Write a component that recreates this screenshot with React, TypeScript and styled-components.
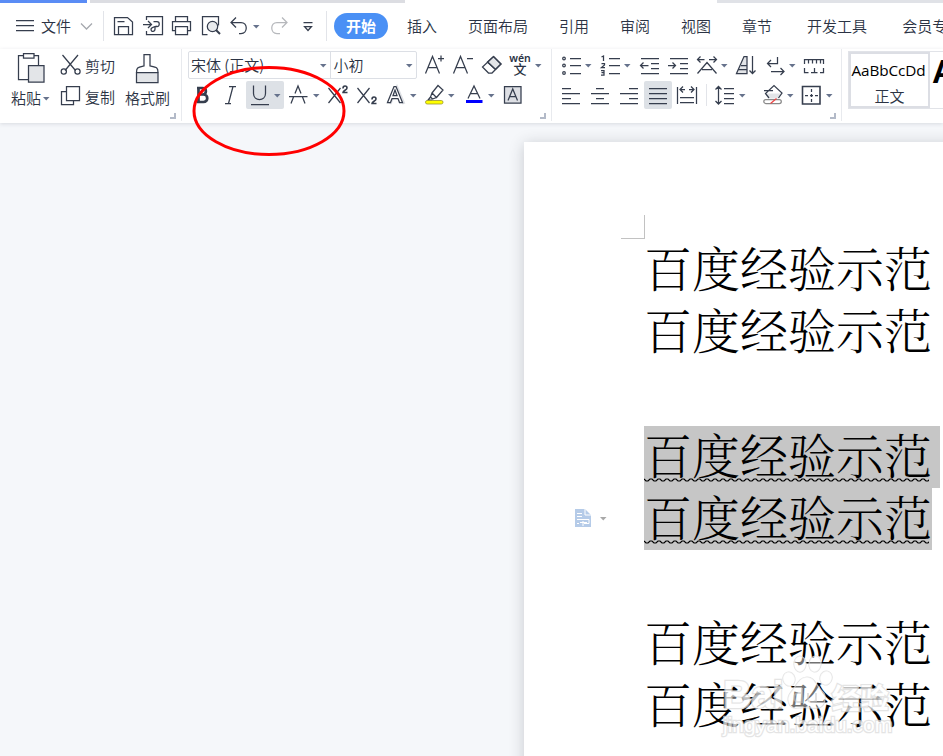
import React from "react";
import styled, { createGlobalStyle } from "styled-components";

const INK = "#2b3344";

const GlobalStyle = createGlobalStyle`
  * { box-sizing: border-box; }
  html, body { margin: 0; padding: 0; overflow: hidden; }
  body { font-family: "Noto Sans CJK SC", sans-serif; font-size: 15px; font-weight: 350; color: ${INK}; }
`;

const Window = styled.div`
  position: relative;
  display: flex;
  flex-direction: column;
  width: 943px;
  height: 756px;
  overflow: hidden;
  background: #f5f7fa;
`;

const TabStrip = styled.div`
  display: flex;
  flex: none;
  height: 3px;
  background: #fff;
`;

const TabEdge = styled.div<{ $w: number; $color: string; $gap?: number }>`
  width: ${(p) => p.$w}px;
  margin-left: ${(p) => p.$gap ?? 0}px;
  background: ${(p) => p.$color};
`;

const MenuBar = styled.div`
  display: flex;
  flex: none;
  align-items: center;
  height: 46px;
  background: #fff;
  white-space: nowrap;
`;

const Label = styled.span<{ $gap?: number }>`
  flex: none;
  margin-left: ${(p) => p.$gap ?? 0}px;
  font-size: 15px;
  line-height: 20px;
  white-space: nowrap;
`;

const ActiveTab = styled.span`
  flex: none;
  width: 54px;
  height: 26px;
  margin-left: 7px;
  border-radius: 13px;
  background: #4a90f5;
  color: #fff;
  font-weight: 700;
  line-height: 25px;
  text-align: center;
`;

const Divider = styled.div<{ $h: number; $gap?: number }>`
  flex: none;
  width: 1px;
  height: ${(p) => p.$h}px;
  margin-left: ${(p) => p.$gap ?? 0}px;
  background: #e2e4e9;
`;

const Glyph = styled.svg<{ $gap?: number; $color?: string }>`
  display: block;
  flex: none;
  margin-left: ${(p) => p.$gap ?? 0}px;
  overflow: visible;
  fill: none;
  stroke: ${(p) => p.$color ?? "#363e4e"};
  stroke-width: 1.25;
`;

type IconProps = { w?: number; h?: number; gap?: number; color?: string; children: React.ReactNode };

const Icon = ({ w = 20, h = 24, gap, color, children }: IconProps) => (
  <Glyph width={w} height={h} viewBox={`0 0 ${w} ${h}`} $gap={gap} $color={color}>
    {children}
  </Glyph>
);

const Caret = ({ gap = 4, color = "#66728c" }: { gap?: number; color?: string }) => (
  <Icon w={7} gap={gap} color={color}>
    <path d="M0 11h6.500L3.250 14.500z" fill={color} stroke="none" />
  </Icon>
);

const Ribbon = styled.div`
  display: flex;
  flex: none;
  height: 74px;
  background: #fff;
  box-shadow: 0 1px 4px rgba(40, 50, 70, 0.14);
  z-index: 1;
`;

const Group = styled.section<{ $w: number }>`
  position: relative;
  display: flex;
  flex: none;
  width: ${(p) => p.$w}px;
  height: 72px;
  border-right: 1px solid #e8eaee;
`;

const ToolRows = styled.div<{ $pad: number }>`
  display: flex;
  flex-direction: column;
  gap: 2px;
  padding: 2px 0 0 ${(p) => p.$pad}px;
`;

const ToolRow = styled.div`
  display: flex;
  align-items: center;
  height: 28px;
`;

const Launcher = styled.span`
  position: absolute;
  right: 5px;
  bottom: 2px;
  width: 6px;
  height: 6px;
  border: solid #b3bac8;
  border-width: 0 2px 2px 0;
`;

const BigTool = styled.div<{ $w: number; $pad: number }>`
  display: flex;
  flex: none;
  flex-direction: column;
  width: ${(p) => p.$w}px;
  padding: 4px 0 0 ${(p) => p.$pad}px;
`;

const LabelRow = styled.div`
  display: flex;
  align-items: center;
  height: 24px;
  margin-top: 1px;
`;

const PairColumn = styled.div`
  display: flex;
  flex-direction: column;
  gap: 7px;
  width: 64px;
  padding-top: 5px;
`;

const PairRow = styled.div`
  display: flex;
  align-items: center;
  height: 24px;
`;

const ComboBox = styled.div`
  display: flex;
  width: 229px;
  height: 28px;
  margin-left: -1px;
  border: 1px solid #dcdfe5;
  border-radius: 2px;
`;

const ComboPart = styled.div<{ $w: number }>`
  display: flex;
  align-items: center;
  justify-content: space-between;
  width: ${(p) => p.$w}px;
  padding: 0 3px 1px 2px;
  & + & { border-left: 1px solid #dcdfe5; }
`;

const PhoneticGuide = styled.span`
  display: flex;
  flex: none;
  flex-direction: column;
  align-items: center;
  width: 20px;
  height: 22px;
  margin-left: 8px;
  font: 600 10.5px/9px "Noto Sans", sans-serif;
`;

const PhoneticBase = styled.span`
  font: 500 13px/12px "Noto Sans CJK SC", sans-serif;
`;

const Pressed = styled.div<{ $w: number; $gap: number }>`
  display: flex;
  flex: none;
  align-items: center;
  width: ${(p) => p.$w}px;
  height: 28px;
  margin-left: ${(p) => p.$gap}px;
  padding-left: 5px;
  border-radius: 2px;
  background: #dde1e6;
`;

const StyleGallery = styled.div`
  display: flex;
  flex: none;
  width: 110px;
  height: 58px;
  margin: 2px 0 0 6px;
  border: 1px solid #e1e3e8;
`;

const StyleCard = styled.div`
  display: flex;
  flex: none;
  flex-direction: column;
  align-items: center;
  width: 81px;
  height: 56px;
  border: 2px solid #dcdee4;
`;

const StyleSample = styled.span`
  height: 33px;
  padding-top: 6px;
  margin-left: -2px;
  color: #000;
  font: 400 15.3px/20px "Open Sans", sans-serif;
  letter-spacing: -0.1px;
`;

const HeadingSample = styled.span`
  margin-left: 2px;
  color: #000;
  font: 700 33px/39px "Liberation Sans", sans-serif;
`;

const Workspace = styled.main`
  display: flex;
  flex: 1;
  min-height: 0;
  padding: 19px 0 0 524px;
`;

const Page = styled.article`
  display: flex;
  flex: none;
  width: 440px;
  height: 700px;
  background: #fff;
  box-shadow: 0 2px 14px rgba(40, 45, 55, 0.22);
`;

const Gutter = styled.aside`
  display: flex;
  flex: none;
  flex-direction: column;
  width: 120px;
`;

const CornerMark = styled.div`
  width: 24px;
  height: 24px;
  margin: 73px 0 0 97px;
  border: solid #c2c2c2;
  border-width: 0 1px 1px 0;
`;

const PasteOptions = styled.div`
  display: flex;
  align-items: center;
  height: 24px;
  margin: 267px 0 0 51px;
`;

const Lines = styled.div`
  display: flex;
  flex-direction: column;
  padding-top: 97px;
`;

const Line = styled.p<{ $selected?: number }>`
  width: ${(p) => p.$selected ?? 288}px;
  height: 62.3px;
  margin: 0;
  background: ${(p) => (p.$selected ? "#c6c6c6" : "transparent")};
  color: #000;
  font: 300 48px/56px "Noto Serif CJK SC", "Noto Sans CJK SC Light", "Noto Sans CJK SC", serif;
  white-space: nowrap;
`;

const Wave = styled.svg`
  display: block;
  margin-top: -5px;
  fill: none;
  stroke: #000;
  stroke-width: 1.2;
`;

const Annotation = styled.svg`
  position: absolute;
  left: 189px;
  top: 64px;
  z-index: 3;
  fill: none;
  stroke: #f00;
  stroke-width: 3;
`;

const Watermark = styled.div`
  position: absolute;
  left: 723px;
  top: 655px;
  width: 172px;
  z-index: 3;
  opacity: 0.75;
  color: #fff;
  white-space: nowrap;
  -webkit-text-stroke: 2.5px #dcdcdc;
  paint-order: stroke fill;
`;

const WatermarkBrand = styled.div`
  display: flex;
  align-items: flex-end;
  height: 55px;
  font: 700 39px/30px "Liberation Sans", sans-serif;
`;

const WatermarkChinese = styled.span`
  margin-left: 2px;
  font: 700 28.5px/26px "Noto Sans CJK SC", sans-serif;
`;

const WatermarkUrl = styled.div`
  margin-top: 4px;
  font: 400 21px/22px "Liberation Sans", sans-serif;
`;

const wavePath = (() => {
  let d = "M0 2";
  for (let x = 0; x < 284; x += 8) d += "l2 2h2l2 -2h2";
  return d;
})();

const DocLine = ({ selected }: { selected?: number }) => (
  <Line $selected={selected}>
    百度经验示范
    {selected && (
      <Wave width="285" height="5">
        <path d={wavePath} />
      </Wave>
    )}
  </Line>
);

const App = () => (
  <>
    <GlobalStyle />
    <Window>
      <TabStrip>
        <TabEdge $w={87} $color="#5a8cf5" />
        <TabEdge $w={315} $gap={3} $color="#dcdde2" />
        <TabEdge $w={226} $gap={312} $color="#e0e2e7" />
      </TabStrip>

      <MenuBar>
        <Icon w={18} gap={16}><path d="M0 6.500h18M0 11.500h18M0 16.500h18" /></Icon>
        <Label $gap={7}>文件</Label>
        <Icon w={12} gap={10} color="#a5a8ae"><path d="M0 9.500l5.500 5.500 5.500-5.500" /></Icon>
        <Divider $h={30} $gap={10} />
        <Icon gap={10}>
          <path d="M0.500 3.500h13l5 4.500v12.500h-18zM4.500 20.500v-8h10v8M3.500 7.500h7" />
        </Icon>
        <Icon gap={9}>
          <path d="M3.500 6V2.500h16v18h-16V17M0 10.500h8.500M5 7l3.500 3.500L5 14M10.500 7.500h3.500c3 0 3 5 0 5h-2v2.500c0 3-4 3-4 .500s4-2.500 6-3.500" />
        </Icon>
        <Icon gap={9}>
          <path d="M3.500 7.500v-5h12v5M3.500 16.500h-3v-9h18v9h-3" />
          <path d="M3.500 12.500h12v8h-12z" fill="#fff" />
        </Icon>
        <Icon gap={10}>
          <path d="M5.500 20.500h-5v-18h16v5M16.500 2.500v9" />
          <circle cx="10.500" cy="12.500" r="5.200" fill="#e9ebee" />
          <path d="M14 16l4 4" strokeWidth="2" />
        </Icon>
        <Icon w={18} gap={8}><path d="M6 3.500L1 8.500l5 5M1.500 8.500H11c7 0 7 11 0 11H9" /></Icon>
        <Caret gap={5} />
        <Icon w={18} gap={10} color="#b6b8bc"><path d="M12 3.500l5 5-5 5M16.500 8.500H7c-7 0-7 11 0 11h3" /></Icon>
        <Icon w={12} gap={15}><path d="M0.500 8.500h9M1.500 12.500l3.500 4 3.500-4z" /></Icon>
        <Divider $h={30} $gap={11} />
        <ActiveTab>开始</ActiveTab>
        <Label $gap={19}>插入</Label>
        <Label $gap={31}>页面布局</Label>
        <Label $gap={31}>引用</Label>
        <Label $gap={31}>审阅</Label>
        <Label $gap={31}>视图</Label>
        <Label $gap={31}>章节</Label>
        <Label $gap={35}>开发工具</Label>
        <Label $gap={35}>会员专享</Label>
      </MenuBar>

      <Ribbon>
        <Group $w={182}>
          <BigTool $w={61} $pad={11}>
            <Icon w={28} h={32} gap={7}>
              <path d="M10 26.500H0.500V2.500h5M16 2.500h4.500V12M5.500 0.500h10.500v4.500H5.500z" />
              <path d="M10.500 12.500h15.500v16.500H10.500z" fill="#e3e5e8" />
            </Icon>
            <LabelRow>
              <Label>粘贴</Label>
              <Caret gap={2} />
            </LabelRow>
          </BigTool>
          <PairColumn>
            <PairRow>
              <Icon w={20}>
                <path d="M1.500 1l13 15.500M17 1L4 16.500" />
                <circle cx="2.800" cy="17.500" r="2.600" />
                <circle cx="16.500" cy="17.500" r="2.600" />
              </Icon>
              <Label $gap={4}>剪切</Label>
            </PairRow>
            <PairRow>
              <Icon w={20}>
                <path d="M5.500 6.500h-5v13h12v-4" />
                <path d="M5.500 1.500h13v14h-13z" />
              </Icon>
              <Label $gap={4}>复制</Label>
            </PairRow>
          </PairColumn>
          <BigTool $w={50} $pad={0}>
            <Icon w={24} h={32} gap={11}>
              <path d="M0.500 19.500h21.500v10H0.500z" fill="#e3e5e8" />
              <path d="M0.500 19.500c0-5 1-5 7.500-6.500V1.500h6v11.500c7 1.500 8 1.500 8 6.500" />
            </Icon>
            <LabelRow><Label>格式刷</Label></LabelRow>
          </BigTool>
          <Launcher />
        </Group>

        <Group $w={370}>
          <ToolRows $pad={7}>
            <ToolRow>
              <ComboBox>
                <ComboPart $w={142}><span>宋体 (正文)</span><Caret /></ComboPart>
                <ComboPart $w={86}><span>小初</span><Caret /></ComboPart>
              </ComboBox>
              <Icon gap={8}><path d="M0.500 20.500L7.500 3.500l7 17M3 14.500h9M13 5.500h6M16 2.500v6" /></Icon>
              <Icon gap={8}><path d="M0.500 20.500L7.500 3.500l7 17M3 14.500h9M14 5.500h6" /></Icon>
              <Icon gap={9}>
                <path d="M5.500 9l6-5.500 7.500 7.500-5.500 5.500z" fill="#e3e5e8" />
                <path d="M11.500 3.500l7.500 7.500-9 9H6.500l-6-6zM5.500 9l8 7.500" />
              </Icon>
              <PhoneticGuide>
                wén
                <PhoneticBase>文</PhoneticBase>
              </PhoneticGuide>
              <Caret gap={5} />
            </ToolRow>
            <ToolRow>
              <Icon w={14} gap={6}><path d="M2 5h5.500c4.500 0 4.500 6.500 0 6.500H3.500h5c5 0 5 7.500 0 7.500H2M3.500 5v14" strokeWidth="2.700" /></Icon>
              <Icon w={12} gap={16}><path d="M4 3.500h7M0 20.500h6M8 3.500L3.500 20.500" /></Icon>
              <Pressed $w={38} $gap={9}>
                <Icon w={18}><path d="M2.500 2.500v8c0 8 12 8 12 0v-8M0 21.500h18" /></Icon>
                <Caret gap={5} />
              </Pressed>
              <Icon gap={5}><path d="M0 13.500h18.500M2 20.500L4.500 14M6 10.500L9 3l3 7.500M13.500 14l2.500 6.500" /></Icon>
              <Caret gap={4} />
              <Icon gap={8}><path d="M0.500 5l12 15M12.500 5l-12 15" /><path d="M15 5.500c0-3.500 4-3 4-.500 0 2-4 2.500-4 4.500h4.500" strokeWidth="1.600" /></Icon>
              <Icon gap={9}><path d="M0.500 5l12 15M12.500 5l-12 15" /><path d="M15 16.500c0-3.500 4-3 4-.500 0 2-4 2.500-4 4.500h4.500" strokeWidth="1.600" /></Icon>
              <Icon w={18} gap={10}>
                <path d="M3 21L10 4.500l7 16.500" stroke="#dfe1e5" strokeWidth="3" />
                <path d="M0.500 19.500L7 3.500h2l6.500 16h-3l-1.500-4H5l-1.500 4zM6 12.500h4L8 7z" fill="#fff" />
              </Icon>
              <Caret gap={5} />
              <Icon w={19} gap={8}>
                <path d="M7 10l6-7.500 5 4.500-6.500 7.500zM7 10l-1.500 4 2 2 4-1.500M5.500 14L3 17h4" />
                <rect x="0.500" y="17.500" width="17.500" height="3.500" rx="1.700" fill="#ff0" stroke="#9a9430" strokeWidth="0.800" />
              </Icon>
              <Caret />
              <Icon w={17} gap={11}>
                <path d="M2 15.500L8 3l6 12.500M4.500 10.500h7" />
                <path d="M0 18.500h16.500" stroke="#00f" strokeWidth="3" />
              </Icon>
              <Caret gap={5} />
              <Icon w={18} gap={9}>
                <path d="M0.500 3.500h16.500v16.500H0.500z" fill="#dddfe4" />
                <path d="M4 17.500L8.750 6l4.750 11.500M6 13.500h6" />
              </Icon>
            </ToolRow>
          </ToolRows>
          <Launcher />
        </Group>

        <Group $w={290}>
          <ToolRows $pad={10}>
            <ToolRow>
              <Icon>
                <path d="M8 5.500h11M8 12.500h11M8 20.500h11" />
                <circle cx="2" cy="5.500" r="1.300" />
                <circle cx="2" cy="12.500" r="1.300" />
                <circle cx="2" cy="20" r="1.300" />
              </Icon>
              <Caret gap={3} />
              <Icon gap={9}>
                <path d="M8 5.500h11M8 12.500h11M8 20.500h11M0.500 4l2-1v5M0.500 10.500h3v1.500l-3 2.500h3.500M0 17.500h3v4.500H0M0.500 19.500h2.500" />
              </Icon>
              <Caret gap={3} />
              <Icon gap={9}><path d="M1 5.500h18M11 10.500h8M11 15.500h8M1 20.500h18M0.500 12.500h8M3.500 9.500l-3 3 3 3" /></Icon>
              <Icon gap={9}><path d="M1 5.500h18M11 10.500h8M11 15.500h8M1 20.500h18M-1 12.500h7.500M3.500 9.500l3 3-3 3" /></Icon>
              <Icon gap={8}><path d="M0.500 20.500l9.500-11 9.500 11M5 16.500h10M0 6.500h7.500M3.500 3.500l-3 3 3 3M12 6.500h7.500M16.500 3.500l3 3-3 3" /></Icon>
              <Caret />
              <Icon gap={8}>
                <path d="M0.500 20.500L8 3.500h3v17zM5 12.500h6M2.500 16.500h8.500" fill="#e3e5e8" />
                <path d="M16.500 3v17.500M13.500 17.500l3 3 3-3" />
              </Icon>
              <Icon w={18} gap={11}><path d="M10.500 4v6.500H0.500M4 7L0.500 10.500 4 14M4 18.500h13M13.500 15l3.500 3.500-3.500 3.500" /></Icon>
              <Caret />
              <Icon gap={8}><path d="M0.500 11V6.500h19V11M4.500 7v3.500M8.500 7v3.500M12.500 7v3.500M16.500 7v3.500M0.500 15v4.500h4M7 19.500h6.500M10.500 15v4.500M16 19.500h3.500V15" /></Icon>
            </ToolRow>
            <ToolRow>
              <Icon w={19}><path d="M0 5.500h9M0 10.500h18M0 15.500h9M0 20.500h18" /></Icon>
              <Icon w={19} gap={10}><path d="M5 5.500h8M0 10.500h18M5 15.500h8M0 20.500h18" /></Icon>
              <Icon w={19} gap={10}><path d="M9 5.500h9M0 10.500h18M9 15.500h9M0 20.500h18" /></Icon>
              <Pressed $w={28} $gap={5}>
                <Icon w={18}><path d="M0 5.500h18M0 10.500h18M0 15.500h18M0 20.500h18" /></Icon>
              </Pressed>
              <Icon gap={5}><path d="M0.500 4v17M19.500 4v17M3 14.500h14M3 19.500h14M3 6.500h5M6 3.500l-3 3 3 3M12 6.500h5M14 3.500l3 3-3 3" /></Icon>
              <Divider $h={22} $gap={9} />
              <Icon gap={8}><path d="M3.500 3.500v17.500M0.500 6.500l3-3 3 3M0.500 18l3 3 3-3M9 5.500h10M9 10.500h10M9 15.500h10M9 20.500h10" /></Icon>
              <Caret gap={4} />
              <Icon gap={17}>
                <path d="M3 10.500h15l-2.500 5H6z" fill="#e3e5e8" stroke="none" />
                <path d="M6 15L2.500 10.500l8.500-8 8 7.500-3.500 5M1 7.500h9" />
                <rect x="0.800" y="16.500" width="17.500" height="4" rx="2" fill="#fff" stroke="#8a8a8a" />
                <path d="M7.500 20.500l6-5" stroke="#e44" />
              </Icon>
              <Caret />
              <Icon gap={8}>
                <path d="M0.500 3.500h17.500v17.500H0.500z" strokeWidth="1.600" />
                <path d="M3 12.500h13M9.500 6v13" strokeDasharray="3 2" />
              </Icon>
              <Caret />
            </ToolRow>
          </ToolRows>
          <Launcher />
        </Group>

        <StyleGallery>
          <StyleCard>
            <StyleSample>AaBbCcDd</StyleSample>
            <Label>正文</Label>
          </StyleCard>
          <HeadingSample>A</HeadingSample>
        </StyleGallery>
      </Ribbon>

      <Workspace>
        <Page>
          <Gutter>
            <CornerMark />
            <PasteOptions>
              <Icon w={16} h={18}>
                <path d="M0 0h10l6 6v12H0z" fill="#b5cbe8" stroke="none" />
                <path d="M10 0v6h6M2 4.500h5M2 7.500h5M2 10.500h12v4H9M5 13.500h7M8 12v5M2 14.500h2" stroke="#fff" strokeWidth="1" />
              </Icon>
              <Caret gap={9} color="#a8a8a8" />
            </PasteOptions>
          </Gutter>
          <Lines>
            <DocLine />
            <DocLine />
            <Line />
            <DocLine selected={296} />
            <DocLine selected={288} />
            <Line />
            <DocLine />
            <DocLine />
          </Lines>
        </Page>
      </Workspace>

      <Watermark>
        <WatermarkBrand>
          Bai
          <Icon w={46} h={55} color="#d8d8d8">
            <g fill="#fff" fillOpacity="0.6">
              <ellipse cx="5" cy="24" rx="6" ry="7" transform="rotate(-15 5 24)" />
              <ellipse cx="16" cy="9" rx="6" ry="8" />
              <ellipse cx="31" cy="9" rx="6" ry="8" transform="rotate(8 31 9)" />
              <ellipse cx="42" cy="23" rx="6" ry="7" transform="rotate(15 42 23)" />
              <path d="M23 22c8 0 9 9 15 14s3 17-5 17-12-1-20 0-12-9-6-16 8-15 16-15z" />
            </g>
            <path d="M18 33v14h-4c-5 0-5-9 0-9h4M24 38v6c0 4 8 4 8 0v-6M32 38v9" strokeWidth="2" />
          </Icon>
          <WatermarkChinese>经验</WatermarkChinese>
        </WatermarkBrand>
        <WatermarkUrl>jingyan.baidu.com</WatermarkUrl>
      </Watermark>

      <Annotation width="160" height="96">
        <ellipse cx="80" cy="47" rx="75" ry="43.500" />
      </Annotation>
    </Window>
  </>
);

export default App;
